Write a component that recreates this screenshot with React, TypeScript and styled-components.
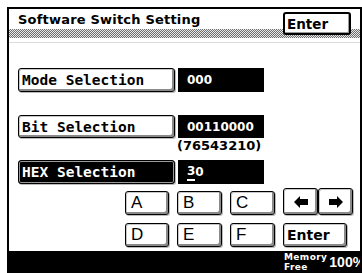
import styled, { createGlobalStyle } from "styled-components";

const GlobalStyle = createGlobalStyle`
  html, body {
    margin: 0;
    padding: 0;
    background: #fff;
  }
  body {
    font-family: "DejaVu Sans", sans-serif;
    overflow: hidden;
  }
`;

const dither = `repeating-conic-gradient(#6e6e6e 0 25%, #e8e8e8 0 50%) 0 0 / 2px 2px`;

const Frame = styled.div`
  box-sizing: border-box;
  width: 355px;
  height: 266px;
  margin: 7px 0 0 7px;
  border: 2px solid #000;
  border-bottom: none;
  display: flex;
  flex-direction: column;
  overflow: hidden;
`;

const Header = styled.div`
  flex: none;
  height: 29px;
  display: flex;
  align-items: flex-start;
  justify-content: space-between;
  padding: 0 9px;
  background:
    linear-gradient(#fff, #fff) top / 100% 20px no-repeat,
    ${dither};
`;

const Title = styled.div`
  margin-top: 3px;
  font-size: 13px;
  line-height: 16px;
  font-weight: 700;
  letter-spacing: 0.2px;
  color: #000;
`;

const TopEnter = styled.div`
  box-sizing: border-box;
  margin-top: 3px;
  width: 68px;
  height: 23px;
  border: 2px solid #000;
  border-radius: 3px;
  background: #fff;
  box-shadow: inset -1px -1px 0 #999;
  padding-left: 2px;
  display: flex;
  align-items: center;
  font-size: 13.5px;
  font-weight: 700;
`;

const Body = styled.div`
  flex: 1;
  display: flex;
  flex-direction: column;
  padding-left: 9px;
`;

const Divider = styled.div`
  height: 1px;
  margin: 4px 0 0 -9px;
  background: #dcdcdc;
`;

const Row = styled.div<{ $top: number; $height: number }>`
  display: flex;
  gap: 3px;
  margin-top: ${({ $top }) => $top}px;
  height: ${({ $height }) => $height}px;
`;

const SelectButton = styled.div<{ $active?: boolean }>`
  box-sizing: border-box;
  width: 157px;
  height: 100%;
  border: 1px solid #000;
  border-radius: 3px;
  padding-left: 3px;
  display: flex;
  align-items: center;
  font-family: "DejaVu Sans Mono", monospace;
  font-size: 14.5px;
  font-weight: 700;
  background: ${({ $active }) => ($active ? "#000" : "#fff")};
  color: ${({ $active }) => ($active ? "#fff" : "#000")};
  box-shadow: ${({ $active }) =>
    $active
      ? "inset 0 0 0 1px #9a9a9a, 1px 1px 0 #bbb"
      : "inset -2px -2px 0 #8a8a8a, inset 1px 1px 0 #c8c8c8, 1px 1px 0 #bbb"};
`;

const ValueBox = styled.div`
  box-sizing: border-box;
  width: 86px;
  height: 100%;
  background: #000;
  color: #fff;
  padding-left: 9px;
  display: flex;
  align-items: center;
  font-size: 12px;
  font-weight: 700;
`;

const Cursor = styled.span`
  border-bottom: 2px solid #fff;
  padding-bottom: 1px;
`;

const Caption = styled.div`
  margin: 2px 0 0 159px;
  height: 12px;
  line-height: 12px;
  font-size: 13px;
  font-weight: 700;
`;

const Keypad = styled.div`
  display: grid;
  grid-template-columns: 44px 45px 45px 71px;
  grid-auto-rows: 24px;
  column-gap: 8px;
  row-gap: 8px;
  margin: 7px 0 0 107px;
`;

const Key = styled.div<{ $bold?: boolean }>`
  box-sizing: border-box;
  width: ${({ $bold }) => ($bold ? "64px" : "auto")};
  border: 1px solid #000;
  border-radius: 3px;
  background: #fff;
  box-shadow: inset -2px -2px 0 #8a8a8a, inset 1px 1px 0 #c8c8c8,
    1px 1px 0 #bbb;
  display: flex;
  align-items: center;
  padding-left: ${({ $bold }) => ($bold ? "3px" : "5px")};
  font-size: ${({ $bold }) => ($bold ? "14px" : "17px")};
  font-weight: ${({ $bold }) => ($bold ? 700 : 400)};
  font-family: ${({ $bold }) =>
    $bold ? `"DejaVu Sans", sans-serif` : `"Liberation Sans", sans-serif`};
`;

const ArrowPair = styled.div`
  display: flex;
  margin-top: -3px;
`;

const ArrowKey = styled(Key)`
  width: 35px;
  justify-content: center;
  padding-left: 0;
`;

const Footer = styled.div`
  flex: none;
  height: 22px;
  background: #000;
  color: #fff;
  display: flex;
  align-items: center;
  padding-left: 275px;
  white-space: nowrap;
`;

const MemoryLabel = styled.div`
  font-size: 9px;
  line-height: 10px;
  font-weight: 700;
  letter-spacing: 0.4px;
`;

const Percent = styled.div`
  margin-left: 2px;
  font-family: "Liberation Sans", sans-serif;
  font-size: 14px;
  font-weight: 700;
`;

const Arrow = ({ dir }: { dir: "left" | "right" }) => (
  <svg width="14" height="12" viewBox="0 0 14 12">
    <polygon
      fill="#000"
      points={
        dir === "left"
          ? "0,6 6,0 6,3 14,3 14,9 6,9 6,12"
          : "14,6 8,0 8,3 0,3 0,9 8,9 8,12"
      }
    />
  </svg>
);

export default function App() {
  return (
    <>
      <GlobalStyle />
      <Frame>
        <Header>
          <Title>Software Switch Setting</Title>
          <TopEnter>Enter</TopEnter>
        </Header>
        <Body>
          <Divider />
          <Row $top={25} $height={24}>
            <SelectButton>Mode Selection</SelectButton>
            <ValueBox>000</ValueBox>
          </Row>
          <Row $top={23} $height={23}>
            <SelectButton>Bit Selection</SelectButton>
            <ValueBox>00110000</ValueBox>
          </Row>
          <Caption>(76543210)</Caption>
          <Row $top={8} $height={24}>
            <SelectButton $active>HEX Selection</SelectButton>
            <ValueBox>
              <Cursor>3</Cursor>0
            </ValueBox>
          </Row>
          <Keypad>
            <Key>A</Key>
            <Key>B</Key>
            <Key>C</Key>
            <ArrowPair>
              <ArrowKey>
                <Arrow dir="left" />
              </ArrowKey>
              <ArrowKey>
                <Arrow dir="right" />
              </ArrowKey>
            </ArrowPair>
            <Key>D</Key>
            <Key>E</Key>
            <Key>F</Key>
            <Key $bold>Enter</Key>
          </Keypad>
        </Body>
        <Footer>
          <MemoryLabel>
            Memory
            <br />
            Free
          </MemoryLabel>
          <Percent>100%</Percent>
        </Footer>
      </Frame>
    </>
  );
}
